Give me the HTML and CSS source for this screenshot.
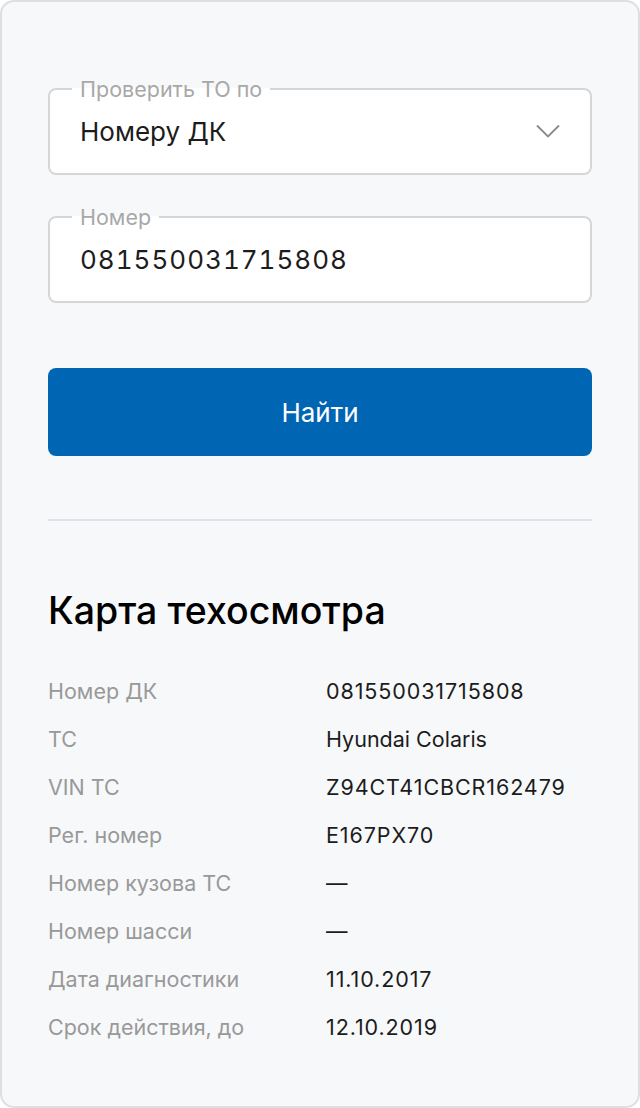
FILE: index.html
```html
<!DOCTYPE html>
<html lang="ru">

<head>
    <meta charset="UTF-8">
    <meta name="viewport" content="width=device-width, initial-scale=1.0">
    <title>Проверка техосмотра</title>
    <link rel="stylesheet" href="styles.css">
</head>

<body>
    <div class="card">
        <form class="search-form" onsubmit="return false">
            <fieldset class="field">
                <legend class="field-label">Проверить ТО по</legend>
                <div class="field-value select-value">
                    <span>Номеру ДК</span>
                    <svg class="chevron" width="24" height="14" viewBox="0 0 24 14" fill="none">
                        <path d="M1 1.5l11 11 11-11" stroke="#8a8a8a" stroke-width="1.8" />
                    </svg>
                </div>
            </fieldset>

            <fieldset class="field">
                <legend class="field-label">Номер</legend>
                <div class="field-value number-value">081550031715808</div>
            </fieldset>

            <button class="btn-search" type="submit">Найти</button>
        </form>

        <hr class="divider">

        <h2 class="title">Карта техосмотра</h2>

        <dl class="details">
            <div class="row"><dt>Номер ДК</dt><dd class="num">081550031715808</dd></div>
            <div class="row"><dt>ТС</dt><dd>Hyundai Colaris</dd></div>
            <div class="row"><dt>VIN ТС</dt><dd class="num">Z94CT41CBCR162479</dd></div>
            <div class="row"><dt>Рег. номер</dt><dd class="num">E167PX70</dd></div>
            <div class="row"><dt>Номер кузова ТС</dt><dd>—</dd></div>
            <div class="row"><dt>Номер шасси</dt><dd>—</dd></div>
            <div class="row"><dt>Дата диагностики</dt><dd class="num">11.10.2017</dd></div>
            <div class="row"><dt>Срок действия, до</dt><dd class="num">12.10.2019</dd></div>
        </dl>
    </div>
</body>

</html>
```

FILE: styles.css
```css
body {
    margin: 0;
    padding: 0;
    background-color: #ffffff;
    font-family: Inter, "Noto Sans", sans-serif;
    color: #1c1c1c;
}

.card {
    box-sizing: border-box;
    width: 640px;
    height: 1108px;
    padding: 76px 46px 0;
    background-color: #f7f8fa;
    border: 2px solid #dedfe1;
    border-radius: 14px;
}

.search-form {
    display: flex;
    flex-direction: column;
}

.field {
    margin: 0 0 31px;
    padding: 0 30px;
    border: 2px solid #d6d6d6;
    border-radius: 8px;
    background-color: #ffffff;
}

.field-label {
    padding: 0 8px;
    margin-left: -8px;
    font-size: 21.5px;
    line-height: 22px;
    color: #a8a8a8;
}

.field-value {
    box-sizing: border-box;
    height: 73px;
    padding-bottom: 11px;
    display: flex;
    align-items: center;
    font-size: 26px;
}

.select-value {
    justify-content: space-between;
}

.number-value {
    font-variant-numeric: tabular-nums;
    letter-spacing: 1px;
}

.btn-search {
    margin-top: 34px;
    height: 88px;
    border: none;
    border-radius: 8px;
    background-color: #0066b3;
    color: #ffffff;
    font-family: inherit;
    font-size: 26px;
    cursor: pointer;
}

.divider {
    margin: 63px 0 0;
    border: none;
    height: 2px;
    background-color: #dfe4ea;
}

.title {
    margin: 68px 0 0;
    font-size: 37.5px;
    line-height: 44px;
    font-weight: 500;
    color: #000000;
}

.details {
    margin: 34px 0 0;
}

.row {
    display: flex;
    height: 48px;
    align-items: center;
    font-size: 21.5px;
}

.row dt {
    width: 278px;
    color: #999999;
}

.row dd {
    margin: 0;
    color: #1c1c1c;
}

.row dd.num {
    letter-spacing: 0.9px;
}
```
